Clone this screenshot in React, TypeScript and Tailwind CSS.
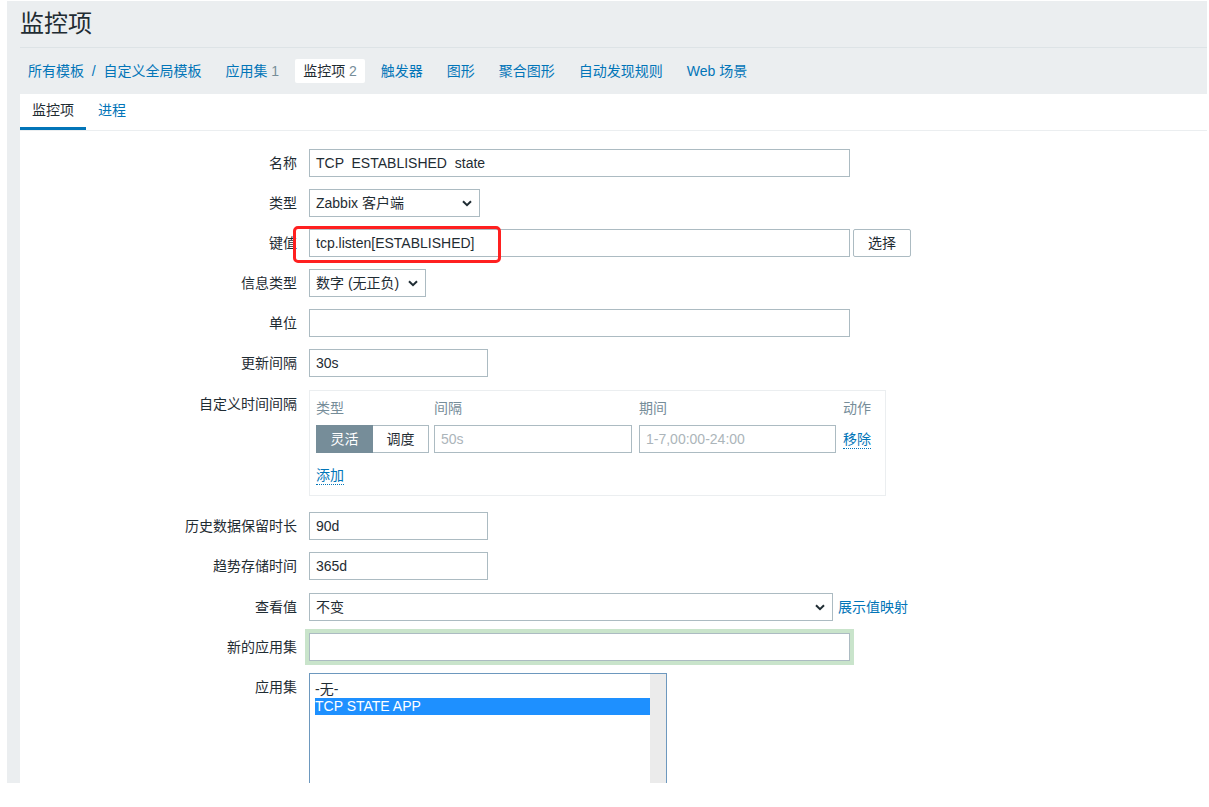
import type { ReactNode } from "react";

const ink = "text-[#1f2c33]";
const link = "text-[#0275b8]";

function Chevron() {
  return (
    <svg width="10" height="7" viewBox="0 0 10 7" aria-hidden>
      <path d="M1 1.2l4 4 4-4" fill="none" stroke="#1f2c33" strokeWidth="2" />
    </svg>
  );
}

function TextBox({ value, width, placeholder }: { value?: string; width: string; placeholder?: string }) {
  return (
    <div className={`flex h-7 items-center border border-[#acbbc2] bg-white px-[6px] whitespace-pre ${width}`}>
      {value ? <span className={ink}>{value}</span> : <span className="text-[#acb5ba]">{placeholder}</span>}
    </div>
  );
}

function Select({ value, width }: { value: string; width: string }) {
  return (
    <div className={`flex h-7 items-center justify-between border border-[#acbbc2] bg-white pl-[6px] pr-[7px] ${width}`}>
      <span className={ink}>{value}</span>
      <Chevron />
    </div>
  );
}

function Row({ label, children, className = "" }: { label: string; children: ReactNode; className?: string }) {
  return (
    <>
      <div className={`pt-[5px] text-right leading-[18px] ${ink} ${className}`}>{label}</div>
      <div className={`flex items-start ${className}`}>{children}</div>
    </>
  );
}

const nav = [
  { text: "应用集", count: "1" },
  { text: "监控项", count: "2", active: true },
  { text: "触发器" },
  { text: "图形" },
  { text: "聚合图形" },
  { text: "自动发现规则" },
  { text: "Web 场景" },
];

export default function App() {
  return (
    <div className="h-[807px] w-full overflow-hidden bg-white font-['Liberation_Sans','Noto_Sans_CJK_SC',sans-serif] text-[14px]">
      <div className="ml-[7px] mt-[1px] flex h-[782px] w-[1200px] flex-col overflow-hidden bg-[#ebeef0] pl-[13px]">
        <header className="flex h-[47px] shrink-0 items-center border-b border-[#dde3e6]">
          <h1 className={`text-[24px] leading-8 font-normal ${ink}`}>监控项</h1>
        </header>

        <nav className="flex h-[46px] shrink-0 items-center gap-2">
          <span className={`px-2 ${link}`}>所有模板 &nbsp;/&nbsp; 自定义全局模板</span>
          {nav.map((n) => (
            <span
              key={n.text}
              className={`rounded-[2px] px-2 leading-6 ${n.active ? `bg-white ${ink}` : link}`}
            >
              {n.text}
              {n.count ? <span className="text-[#768d99]"> {n.count}</span> : null}
            </span>
          ))}
        </nav>

        <main className="min-h-0 flex-1 overflow-hidden bg-white">
          <div className="flex h-[37px] border-b border-[#ebeef0]">
            <div className={`flex items-center border-b-[3px] border-[#0275b8] px-3 ${ink}`}>监控项</div>
            <div className={`flex items-center px-3 pb-[3px] ${link}`}>进程</div>
          </div>

          <div className="grid grid-cols-[277px_1fr] gap-x-3 gap-y-3 pt-[18px]">
            <Row label="名称">
              <TextBox value="TCP  ESTABLISHED  state" width="w-[541px]" />
            </Row>
            <Row label="类型">
              <Select value="Zabbix 客户端" width="w-[171px]" />
            </Row>
            <Row label="键值">
              <div className="relative">
                <TextBox value="tcp.listen[ESTABLISHED]" width="w-[541px]" />
                <div className="pointer-events-none absolute -left-4 -top-[3px] h-[37px] w-[208px] rounded-[5px] border-[3px] border-[#ff2020]" />
              </div>
              <button className={`ml-[3px] h-7 w-[58px] rounded-[2px] border border-[#acbbc2] bg-white ${ink}`}>选择</button>
            </Row>
            <Row label="信息类型">
              <Select value="数字 (无正负)" width="w-[117px]" />
            </Row>
            <Row label="单位">
              <TextBox width="w-[541px]" />
            </Row>
            <Row label="更新间隔">
              <TextBox value="30s" width="w-[179px]" />
            </Row>
            <Row label="自定义时间间隔" className="mt-[1px]">
              <div className="h-[106px] w-[577px] border border-[#ebeef0] px-[6px] pt-2">
                <div className="grid grid-cols-[118px_205px_204px_1fr] leading-[18px] text-[#768d99]">
                  <span>类型</span>
                  <span>间隔</span>
                  <span>期间</span>
                  <span>动作</span>
                </div>
                <div className="mt-2 grid grid-cols-[118px_205px_204px_1fr] items-center">
                  <div className="flex h-7 w-[113px]">
                    <span className="flex w-[57px] items-center justify-center bg-[#768d99] text-white">灵活</span>
                    <span className={`flex w-[56px] items-center justify-center border border-l-0 border-[#acbbc2] ${ink}`}>调度</span>
                  </div>
                  <TextBox placeholder="50s" width="w-[198px]" />
                  <TextBox placeholder="1-7,00:00-24:00" width="w-[197px]" />
                  <span className={`w-fit border-b border-dotted border-[#0275b8] leading-[18px] ${link}`}>移除</span>
                </div>
                <span className={`mt-[13px] inline-block border-b border-dotted border-[#0275b8] leading-[18px] ${link}`}>添加</span>
              </div>
            </Row>
            <Row label="历史数据保留时长" className="mt-1">
              <TextBox value="90d" width="w-[179px]" />
            </Row>
            <Row label="趋势存储时间">
              <TextBox value="365d" width="w-[179px]" />
            </Row>
            <Row label="查看值" className="mt-[1px]">
              <Select value="不变" width="w-[524px]" />
              <span className={`ml-[5px] leading-7 ${link}`}>展示值映射</span>
            </Row>
            <Row label="新的应用集">
              <div className="h-7 w-[541px] border border-[#acbbc2] bg-white ring-4 ring-[#c9e4cb]" />
            </Row>
            <Row label="应用集">
              <div className="flex h-[130px] w-[358px] border border-[#6d98be] bg-white">
                <div className="flex-1 pl-[5px] pt-[7px] leading-[17px]">
                  <div className={ink}>-无-</div>
                  <div className="bg-[#1e90ff] text-white">TCP STATE APP</div>
                </div>
                <div className="w-4 bg-[#ebebeb]" />
              </div>
            </Row>
          </div>
        </main>
      </div>
    </div>
  );
}
